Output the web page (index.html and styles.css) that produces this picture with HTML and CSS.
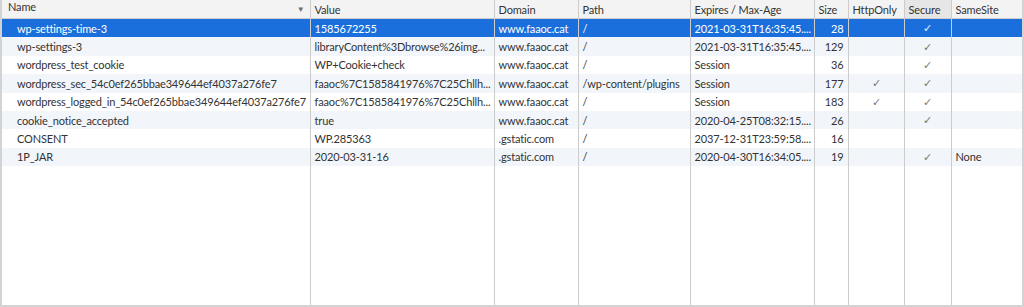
FILE: index.html
```html
<!DOCTYPE html>
<html>
<head>
<meta charset="utf-8">
<link rel="stylesheet" href="styles.css">
</head>
<body>
<div class="grid-wrap">
<table class="cookies">
<colgroup>
<col class="c-name"><col class="c-value"><col class="c-domain"><col class="c-path"><col class="c-exp"><col class="c-size"><col class="c-http"><col class="c-secure"><col class="c-same">
</colgroup>
<thead>
<tr>
<th class="name-h"><span>Name</span><span class="sort">&#9660;</span></th>
<th>Value</th><th>Domain</th><th>Path</th><th>Expires / Max-Age</th><th>Size</th><th>HttpOnly</th><th class="hover">Secure</th><th>SameSite</th>
</tr>
</thead>
<tbody>
<tr class="sel"><td class="name">wp-settings-time-3</td><td>1585672255</td><td>www.faaoc.cat</td><td>/</td><td>2021-03-31T16:35:45....</td><td class="num">28</td><td class="chk"></td><td class="chk">&#10003;</td><td></td></tr>
<tr class="alt"><td class="name">wp-settings-3</td><td>libraryContent%3Dbrowse%26img...</td><td>www.faaoc.cat</td><td>/</td><td>2021-03-31T16:35:45....</td><td class="num">129</td><td class="chk"></td><td class="chk">&#10003;</td><td></td></tr>
<tr><td class="name">wordpress_test_cookie</td><td>WP+Cookie+check</td><td>www.faaoc.cat</td><td>/</td><td>Session</td><td class="num">36</td><td class="chk"></td><td class="chk">&#10003;</td><td></td></tr>
<tr class="alt"><td class="name">wordpress_sec_54c0ef265bbae349644ef4037a276fe7</td><td>faaoc%7C1585841976%7C25Chllh...</td><td>www.faaoc.cat</td><td>/wp-content/plugins</td><td>Session</td><td class="num">177</td><td class="chk">&#10003;</td><td class="chk">&#10003;</td><td></td></tr>
<tr><td class="name">wordpress_logged_in_54c0ef265bbae349644ef4037a276fe7</td><td>faaoc%7C1585841976%7C25Chllh...</td><td>www.faaoc.cat</td><td>/</td><td>Session</td><td class="num">183</td><td class="chk">&#10003;</td><td class="chk">&#10003;</td><td></td></tr>
<tr class="alt"><td class="name">cookie_notice_accepted</td><td>true</td><td>www.faaoc.cat</td><td>/</td><td>2020-04-25T08:32:15....</td><td class="num">26</td><td class="chk"></td><td class="chk">&#10003;</td><td></td></tr>
<tr><td class="name">CONSENT</td><td>WP.285363</td><td>.gstatic.com</td><td>/</td><td>2037-12-31T23:59:58....</td><td class="num">16</td><td class="chk"></td><td class="chk"></td><td></td></tr>
<tr class="alt"><td class="name">1P_JAR</td><td>2020-03-31-16</td><td>.gstatic.com</td><td>/</td><td>2020-04-30T16:34:05....</td><td class="num">19</td><td class="chk"></td><td class="chk">&#10003;</td><td>None</td></tr>
<tr class="filler"><td></td><td></td><td></td><td></td><td></td><td></td><td></td><td></td><td></td></tr>
</tbody>
</table>
</div>
</body>
</html>
```

FILE: styles.css
```css
html, body {
  margin: 0;
  padding: 0;
  background: #ffffff;
}
.grid-wrap {
  width: 1020px;
  height: 305px;
  border-left: 2px solid #d3d3d3;
  border-right: 2px solid #d3d3d3;
  border-bottom: 2px solid #d3d3d3;
}
.cookies {
  width: 100%;
  height: 100%;
  border-collapse: collapse;
  table-layout: fixed;
  font-family: "Lato", "Noto Sans", sans-serif;
  font-size: 11px;
  letter-spacing: -0.15px;
  color: #333333;
}
.c-name { width: 308px; }
.c-value { width: 184px; }
.c-domain { width: 84px; }
.c-path { width: 112px; }
.c-exp { width: 124px; }
.c-size { width: 34px; }
.c-http { width: 56px; }
.c-secure { width: 47px; }
.c-same { width: auto; }
th {
  height: 18px;
  background: #f3f3f3;
  border-bottom: 1px solid #cccccc;
  border-left: 1px solid #cccccc;
  font-weight: normal;
  text-align: left;
  padding: 0 4px;
  white-space: nowrap;
  overflow: hidden;
  color: #333;
}
th:first-child { border-left: none; padding-left: 6px; }
th.hover { background: #e6e6e6; }
.name-h span:first-child { float: left; }
.sort {
  float: right;
  font-size: 8px;
  color: #6e6e6e;
  margin-right: 1px;
  line-height: 18px;
}
td {
  height: 18.4px;
  padding: 0 4px;
  border-left: 1px solid #cccccc;
  white-space: nowrap;
  overflow: hidden;
  vertical-align: middle;
}
td:first-child { border-left: none; }
td.name { padding-left: 15px; }
td.num { text-align: right; }
td.chk { text-align: center; color: #777; font-size: 11px; }
tr.alt td { background: #f2f6fb; }
tr.sel td { background: #1b6fdc; color: #ffffff; }
tr.sel td.chk { color: #e8f0ff; }
tr.filler td { height: auto; background: #ffffff; }
```
